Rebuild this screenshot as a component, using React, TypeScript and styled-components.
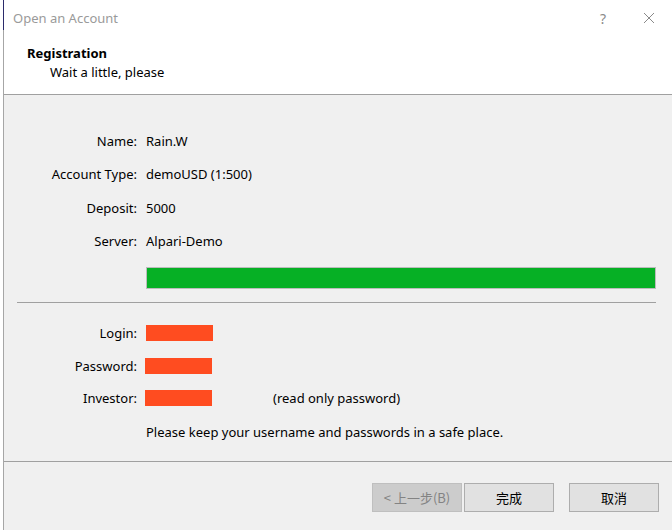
import styled, { createGlobalStyle } from "styled-components";

const Global = createGlobalStyle`
  html, body {
    margin: 0;
    padding: 0;
    background: #ffffff;
  }
  body {
    font-family: "Noto Sans", "Noto Sans CJK SC", sans-serif;
    font-size: 13px;
    color: #000;
  }
`;

const Window = styled.div`
  height: 530px;
  display: flex;
  flex-direction: column;
  box-sizing: border-box;
  margin-left: 3px;
  width: 669px;
  border-left: 1px solid #a6a6a6;
  position: relative;
  &::before {
    content: "";
    position: absolute;
    left: -1px;
    top: 0;
    width: 1px;
    height: 30px;
    background: #2b2b6b;
  }
`;

const TitleBar = styled.div`
  height: 36px;
  display: flex;
  align-items: center;
  background: #fff;
  padding-left: 9px;
`;

const Title = styled.div`
  flex: 1;
  color: #9a9a9a;
  font-size: 13px;
`;

const TitleButton = styled.div`
  width: 46px;
  text-align: center;
  color: #8a8a8a;
  font-size: 14px;
`;

const Header = styled.div`
  height: 59px;
  background: #fff;
  border-bottom: 1px solid #a0a0a0;
  padding-left: 23px;
  box-sizing: border-box;
`;

const HeaderTitle = styled.div`
  font-weight: bold;
  line-height: 18px;
  margin-top: 8px;
`;

const HeaderSub = styled.div`
  padding-left: 23px;
  line-height: 18px;
  margin-top: 1px;
`;

const Body = styled.div`
  flex: 1;
  background: #f0f0f0;
  display: flex;
  flex-direction: column;
`;

const InfoGrid = styled.div<{ $rowHeight: number; $top: number }>`
  display: grid;
  grid-template-columns: 133px 1fr;
  column-gap: 9px;
  grid-auto-rows: ${(p) => p.$rowHeight}px;
  align-items: center;
  margin-top: ${(p) => p.$top}px;
`;

const Label = styled.div`
  text-align: right;
`;

const Value = styled.div`
  display: flex;
  align-items: center;
`;

const Progress = styled.div`
  margin: 9px 0 0 142px;
  width: 510px;
  height: 22px;
  box-sizing: border-box;
  border: 1px solid #bcbcbc;
  background: #06b025;
`;

const Separator = styled.div`
  margin: 13px 16px 0 13px;
  height: 1px;
  background: #a0a0a0;
`;

const Redacted = styled.div<{ $shift?: number }>`
  width: 67px;
  height: 16px;
  background: #ff4c20;
  margin-left: ${(p) => p.$shift ?? 0}px;
`;

const Hint = styled.span`
  margin-left: 61px;
`;

const Footer = styled.div`
  height: 69px;
  border-top: 1px solid #a0a0a0;
  background: #f0f0f0;
  display: flex;
  align-items: flex-start;
  padding-top: 21px;
  padding-left: 368px;
  box-sizing: border-box;
`;

const Button = styled.button<{ $gap?: number }>`
  width: 90px;
  height: 29px;
  margin-left: ${(p) => p.$gap ?? 0}px;
  box-sizing: border-box;
  border: 1px solid #adadad;
  background: #e1e1e1;
  font-family: "Noto Sans CJK SC", sans-serif;
  font-size: 13px;
  color: #000;
  padding: 0;
  &:disabled {
    background: #cccccc;
    border-color: #bfbfbf;
    color: #838383;
  }
`;

export default function App() {
  return (
    <>
      <Global />
      <Window>
        <TitleBar>
          <Title>Open an Account</Title>
          <TitleButton>?</TitleButton>
          <TitleButton>
            <svg width="12" height="12" viewBox="0 0 12 12">
              <path d="M1 1L11 11M11 1L1 11" stroke="#8a8a8a" strokeWidth="1" />
            </svg>
          </TitleButton>
        </TitleBar>
        <Header>
          <HeaderTitle>Registration</HeaderTitle>
          <HeaderSub>Wait a little, please</HeaderSub>
        </Header>
        <Body>
          <InfoGrid $rowHeight={33.5} $top={29}>
            <Label>Name:</Label>
            <Value>Rain.W</Value>
            <Label>Account Type:</Label>
            <Value>demoUSD (1:500)</Value>
            <Label>Deposit:</Label>
            <Value>5000</Value>
            <Label>Server:</Label>
            <Value>Alpari-Demo</Value>
          </InfoGrid>
          <Progress />
          <Separator />
          <InfoGrid $rowHeight={32.5} $top={14}>
            <Label>Login:</Label>
            <Value>
              <Redacted />
            </Value>
            <Label>Password:</Label>
            <Value>
              <Redacted $shift={-1} />
            </Value>
            <Label>Investor:</Label>
            <Value>
              <Redacted $shift={-1} />
              <Hint>(read only password)</Hint>
            </Value>
            <div />
            <Value style={{ marginTop: 3 }}>
              Please keep your username and passwords in a safe place.
            </Value>
          </InfoGrid>
        </Body>
        <Footer>
          <Button disabled>&lt; 上一步(B)</Button>
          <Button $gap={2}>完成</Button>
          <Button $gap={15}>取消</Button>
        </Footer>
      </Window>
    </>
  );
}
